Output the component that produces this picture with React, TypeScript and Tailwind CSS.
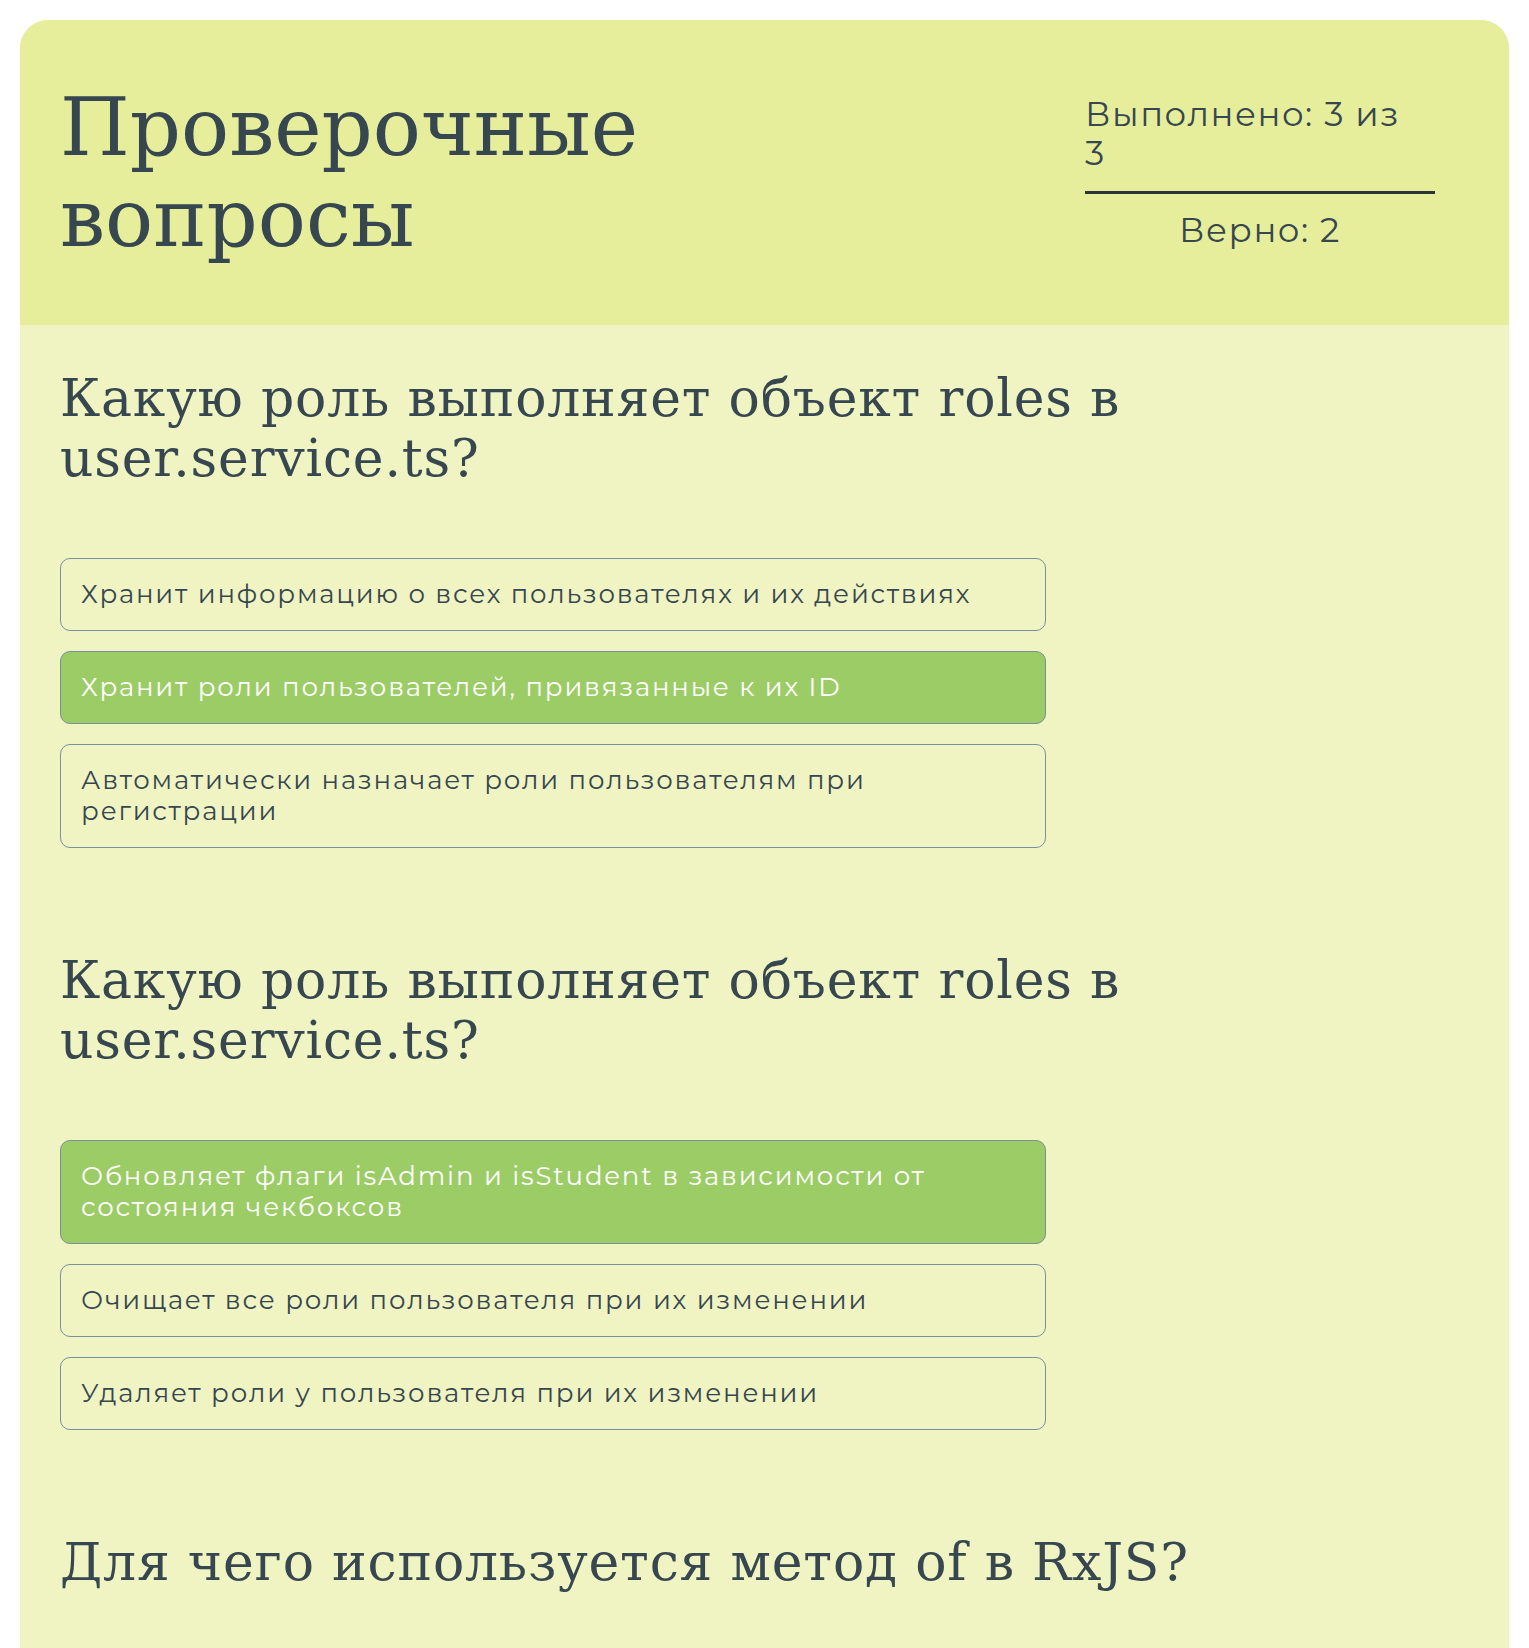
import React from 'react';

interface Question {
  id: number;
  title: string;
  answers: { text: string; correct?: boolean }[];
}

const questions: Question[] = [
  {
    id: 1,
    title: 'Какую роль выполняет объект roles в user.service.ts?',
    answers: [
      { text: 'Хранит информацию о всех пользователях и их действиях' },
      { text: 'Хранит роли пользователей, привязанные к их ID', correct: true },
      { text: 'Автоматически назначает роли пользователям при регистрации' },
    ],
  },
  {
    id: 2,
    title: 'Какую роль выполняет объект roles в user.service.ts?',
    answers: [
      { text: 'Обновляет флаги isAdmin и isStudent в зависимости от состояния чекбоксов', correct: true },
      { text: 'Очищает все роли пользователя при их изменении' },
      { text: 'Удаляет роли у пользователя при их изменении' },
    ],
  },
  {
    id: 3,
    title: 'Для чего используется метод of в RxJS?',
    answers: [],
  },
];

const slab = "font-['Roboto_Slab','DejaVu_Serif',serif]";
const body = "font-['Montserrat','DejaVu_Sans',sans-serif]";

const App: React.FC = () => {
  return (
    <div className="min-h-screen bg-white p-5">
      <div className="rounded-t-[28px] overflow-hidden bg-[#f0f4c3] text-[#37474f]">
        {/* Header */}
        <div className="flex items-center justify-between bg-[#e6ee9c] pl-10 pr-[74px] h-[305px]">
          <h1 className={`${slab} text-[80px] leading-[91px] w-[700px]`}>Проверочные вопросы</h1>
          <div className={`${body} w-[350px] text-[34px] leading-[39px] tracking-[1.5px]`}>
            <div className="pb-[18px] border-b-[3px] border-[#2d3436]">
              <p className="pr-6">Выполнено: 3 из 3</p>
            </div>
            <div className="text-center pt-[17px]">Верно: 2</div>
          </div>
        </div>

        {/* Questions */}
        <div className="px-10 pt-[43px] pb-10">
          {questions.map((q) => (
            <section key={q.id} className="mb-[102px]">
              <h2 className={`${slab} text-[52px] leading-[60px] tracking-[0.8px] max-w-[1200px]`}>{q.title}</h2>
              {q.answers.length > 0 && (
                <div className="mt-[70px] flex flex-col gap-5 w-[986px]">
                  {q.answers.map((a, i) => (
                    <button
                      key={i}
                      className={`${body} text-left px-5 py-5 rounded-[10px] border border-[#78909c] text-[26px] leading-[31px] tracking-[1.8px] ${
                        a.correct ? 'bg-[#9ccc65] text-white' : 'bg-transparent text-[#37474f]'
                      }`}
                    >
                      {a.text}
                    </button>
                  ))}
                </div>
              )}
            </section>
          ))}
        </div>
      </div>
    </div>
  );
};

export default App;
